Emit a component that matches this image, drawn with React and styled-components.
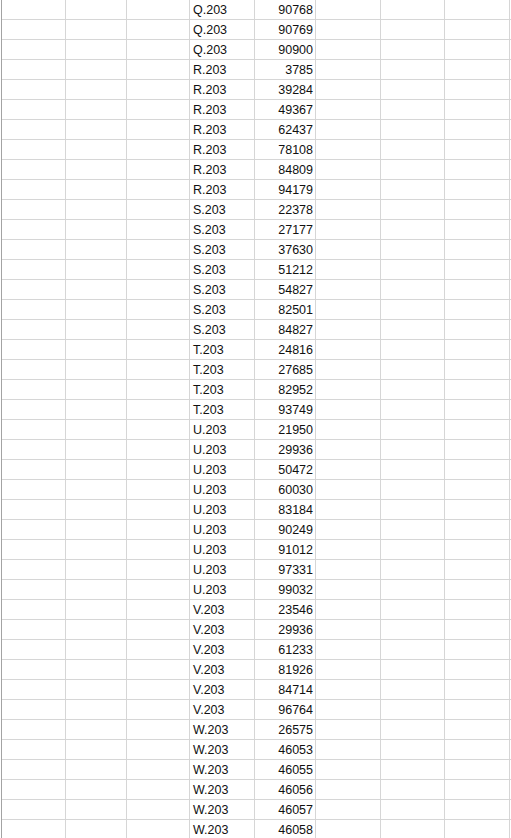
import React from 'react';
import styled, { createGlobalStyle } from 'styled-components';

const GlobalStyle = createGlobalStyle`
    html, body {
        margin: 0;
        padding: 0;
        background: #ffffff;
        overflow: hidden;
    }
`;

// widths in px, each including the 1px grid line on its right
const COLUMNS = [64, 61, 63, 65, 61, 65, 64, 65, 2];

const groups = [
    ['Q', [90768, 90769, 90900]],
    ['R', [3785, 39284, 49367, 62437, 78108, 84809, 94179]],
    ['S', [22378, 27177, 37630, 51212, 54827, 82501, 84827]],
    ['T', [24816, 27685, 82952, 93749]],
    ['U', [21950, 29936, 50472, 60030, 83184, 90249, 91012, 97331, 99032]],
    ['V', [23546, 29936, 61233, 81926, 84714, 96764]],
    ['W', [26575, 46053, 46055, 46056, 46057, 46058]],
];

const rows = groups.flatMap(([letter, nums]) =>
    nums.map((n) => ({ label: `${letter}.203`, value: n }))
);

const Viewport = styled.div`
    width: 511px;
    height: 838px;
    overflow: hidden;
`;

const Sheet = styled.div`
    display: grid;
    grid-template-columns: ${COLUMNS.map((w) => `${w}px`).join(' ')};
    grid-auto-rows: 20px;
    margin-left: 1px;
    border-left: 1px solid #a3a3a3;
    font-family: "Liberation Sans", Arial, sans-serif;
    font-size: 12.5px;
    color: #111111;
`;

const Cell = styled.div`
    box-sizing: border-box;
    border-right: 1px solid #d6d6d6;
    border-bottom: 1px solid #d6d6d6;
    display: flex;
    align-items: flex-end;
    justify-content: ${(p) => (p.$num ? 'flex-end' : 'flex-start')};
    padding: 0 2px 2px 3px;
    line-height: 14px;
    white-space: nowrap;
    overflow: hidden;
    min-width: 0;
`;

export default function App() {
    return (
        <>
            <GlobalStyle />
            <Viewport>
                <Sheet>
                    {rows.map((r, i) =>
                        COLUMNS.map((_, c) => {
                            if (c === 3) return <Cell key={`${i}-${c}`}>{r.label}</Cell>;
                            if (c === 4) return <Cell key={`${i}-${c}`} $num>{r.value}</Cell>;
                            return <Cell key={`${i}-${c}`} />;
                        })
                    )}
                </Sheet>
            </Viewport>
        </>
    );
}
